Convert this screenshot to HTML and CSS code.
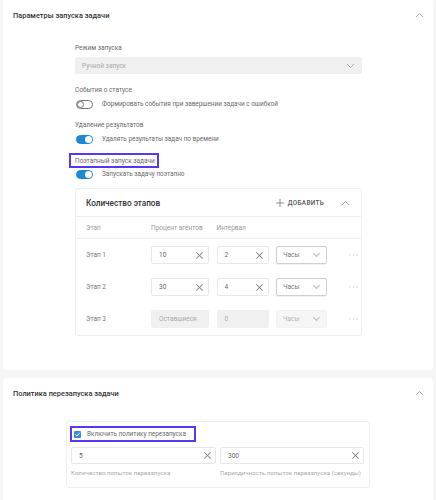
FILE: index.html
```html
<!doctype html>
<html>
<head>
<meta charset="utf-8">
<title>Параметры задачи</title>
<link rel="stylesheet" href="styles.css">
</head>
<body>
<div class="panel panel-launch">
  <div class="panel-head">
    <span class="panel-title">Параметры запуска задачи</span>
    <svg class="chev" width="9" height="6" viewBox="0 0 9 6"><path d="M1 5 L4.5 1.5 L8 5" fill="none" stroke="#999" stroke-width="0.8"/></svg>
  </div>
  <div class="form">
    <div class="label">Режим запуска</div>
    <div class="select-main">
      <span>Ручной запуск</span>
      <svg width="9" height="6" viewBox="0 0 9 6"><path d="M1 1 L4.5 4.5 L8 1" fill="none" stroke="#999" stroke-width="0.8"/></svg>
    </div>

    <div class="label gap">События о статусе</div>
    <div class="toggle-row">
      <span class="toggle"></span>
      <span>Формировать события при завершении задачи с ошибкой</span>
    </div>

    <div class="label gap">Удаление результатов</div>
    <div class="toggle-row">
      <span class="toggle on"></span>
      <span>Удалять результаты задач по времени</span>
    </div>

    <div class="label gap-s"><span class="mark">Поэтапный запуск задачи</span></div>
    <div class="toggle-row tight">
      <span class="toggle on"></span>
      <span>Запускать задачу поэтапно</span>
    </div>

    <div class="stages">
      <div class="stages-head">
        <span class="stages-title">Количество этапов</span>
        <span class="add">
          <svg width="8" height="8" viewBox="0 0 8 8"><path d="M4 0 V8 M0 4 H8" stroke="#777" stroke-width="0.8"/></svg>
          ДОБАВИТЬ
        </span>
        <svg class="chev" width="9" height="6" viewBox="0 0 9 6"><path d="M1 5 L4.5 1.5 L8 5" fill="none" stroke="#999" stroke-width="0.8"/></svg>
      </div>
      <div class="grid grid-head">
        <span>Этап</span>
        <span>Процент агентов</span>
        <span>Интервал</span>
      </div>
      <div class="grid row">
        <span>Этап 1</span>
        <div class="inp">10<i class="x"></i></div>
        <div class="inp">2<i class="x"></i></div>
        <div class="unit">Часы<i class="dn"></i></div>
        <svg class="dots" width="9" height="2" viewBox="0 0 9 2"><circle cx="1" cy="1" r="0.6" fill="#c4c4c4"/><circle cx="4.5" cy="1" r="0.6" fill="#c4c4c4"/><circle cx="8" cy="1" r="0.6" fill="#c4c4c4"/></svg>
      </div>
      <div class="grid row">
        <span>Этап 2</span>
        <div class="inp">30<i class="x"></i></div>
        <div class="inp">4<i class="x"></i></div>
        <div class="unit">Часы<i class="dn"></i></div>
        <svg class="dots" width="9" height="2" viewBox="0 0 9 2"><circle cx="1" cy="1" r="0.6" fill="#c4c4c4"/><circle cx="4.5" cy="1" r="0.6" fill="#c4c4c4"/><circle cx="8" cy="1" r="0.6" fill="#c4c4c4"/></svg>
      </div>
      <div class="grid row">
        <span>Этап 3</span>
        <div class="inp off">Оставшиеся</div>
        <div class="inp off">0</div>
        <div class="unit off">Часы<i class="dn"></i></div>
        <svg class="dots" width="9" height="2" viewBox="0 0 9 2"><circle cx="1" cy="1" r="0.6" fill="#c4c4c4"/><circle cx="4.5" cy="1" r="0.6" fill="#c4c4c4"/><circle cx="8" cy="1" r="0.6" fill="#c4c4c4"/></svg>
      </div>
    </div>
  </div>
</div>

<div class="panel panel-retry">
  <div class="panel-head">
    <span class="panel-title">Политика перезапуска задачи</span>
    <svg class="chev" width="9" height="6" viewBox="0 0 9 6"><path d="M1 5 L4.5 1.5 L8 5" fill="none" stroke="#999" stroke-width="0.8"/></svg>
  </div>
  <div class="retry">
    <div class="check">
      <span class="box"><svg width="7" height="7" viewBox="0 0 7 7"><path d="M1.3 3.6 L2.9 5 L5.8 1.8" fill="none" stroke="#fff" stroke-width="1"/></svg></span>
      Включить политику перезапуска
    </div>
    <div class="retry-fields">
      <div>
        <div class="inp wide">5<i class="x"></i></div>
        <div class="hint">Количество попыток перезапуска</div>
      </div>
      <div>
        <div class="inp wide">300<i class="x"></i></div>
        <div class="hint">Периодичность попыток перезапуска (секунды)</div>
      </div>
    </div>
  </div>
</div>
</body>
</html>
```
FILE: styles.css
```css
*{ margin:0; padding:0; box-sizing:border-box}
body{ background:#f6f6f6; font-family:Roboto, "Noto Sans", sans-serif; font-size:6.5px; color:#6a6a6a; padding:0 3px}

.panel{ background:#fff; border-radius:3px}
.panel-launch{ height:370px}
.panel-retry{ margin-top:8px; height:130px}
.panel-head{ height:30px; display:flex; align-items:center; justify-content:space-between; padding:0 9px 0 10px}
.panel-title{ font-size:7.4px; font-weight:500; color:#333}

.form{ margin-left:72px; width:287px; padding-top:13px}
.label{ line-height:10px; color:#6a6a6a}
.label.gap{ margin-top:11px}
.label.gap-s{ margin-top:9px}
.select-main{ margin-top:4px; height:17px; background:#f0f0f0; border-radius:2px; display:flex; align-items:center; justify-content:space-between; padding:0 7px 0 7px; color:#aaa}

.toggle-row{ margin-top:4px; height:10px; display:flex; align-items:center; gap:9px; color:#6a6a6a; font-size:6.4px}
.toggle-row.tight{ margin-top:1px}
.toggle{ position:relative; width:17px; height:9px; border:1px solid #777; border-radius:5px; margin-left:1px}
.toggle::after{ content:""; position:absolute; left:0; top:0; width:7px; height:7px; border:1px solid #777; border-radius:50%; box-sizing:border-box}
.toggle.on{ background:#1e88d4; border-color:#1e88d4}
.toggle.on::after{ left:auto; right:0; background:#fff; border:none}

.mark{ display:inline-block; border:2px solid #5b36f2; padding:0.5px 2.5px 0.5px 4px; margin-left:-6px}

.stages{ margin-top:9px; border:1px solid #efefef; border-radius:3px; height:148px}
.stages-head{ height:28px; display:flex; align-items:center; padding:0 11px 0 10px; border-bottom:1px solid #efefef}
.stages-title{ font-size:8.2px; font-weight:500; color:#333; flex:1}
.add{ display:flex; align-items:center; gap:4px; font-size:6.4px; font-weight:500; color:#555; letter-spacing:0.3px; margin-right:17px}

.grid{ display:grid; grid-template-columns:57.5px 58px 52px 51px 40px; column-gap:7.5px; align-items:center; padding-left:10px}
.grid-head{ height:22px; border-bottom:1px solid #efefef; color:#999}
.row{ height:32px; color:#777}

.inp{ position:relative; height:18px; border:1px solid #e8e8e8; border-radius:2px; padding-left:7px; display:flex; align-items:center; color:#666}
.inp.off{ background:#f0f0f0; border-color:#f0f0f0; color:#aaa}
.unit{ position:relative; height:18px; border:1px solid #d0d0d0; border-radius:2px; padding-left:6px; display:flex; align-items:center; color:#777; box-shadow:0 1px 1px rgba(0,0,0,0.06)}
.unit.off{ background:#f6f6f6; border-color:#f2f2f2; box-shadow:none; color:#b4b4b4}
.dots{ margin-left:14px}

.x{ position:absolute; right:5px; top:50%; width:7px; height:7px; margin-top:-3.5px}
.x::before,.x::after{ content:""; position:absolute; left:3px; top:-1px; width:0.8px; height:9px; background:#888; transform:rotate(45deg)}
.x::after{ transform:rotate(-45deg)}
.dn{ position:absolute; right:7px; top:50%; width:5px; height:5px; margin-top:-4px; border-right:0.8px solid #bbb; border-bottom:0.8px solid #bbb; transform:rotate(45deg)}

.retry{ margin:13px 0 0 63px; width:304px; height:67px; border:1px solid #efefef; border-radius:3px; padding:4px 5px 0 3px}
.check{ display:inline-flex; align-items:center; gap:6px; height:16px; color:#6a6a6a; padding:0 8px 0 2px; border:2px solid #5b36f2; font-size:6.4px}
.box{ width:7px; height:7px; background:#2f8fd8; border-radius:1px; display:flex}
.retry-fields{ display:grid; grid-template-columns:145px 144px; column-gap:4px; margin-top:5px; padding-left:1px}
.inp.wide{ height:17px; padding-left:7px}
.inp.wide .x{ right:4px}
.hint{ margin-top:4px; color:#aaa; line-height:10px; white-space:nowrap; font-size:6.2px}
```
